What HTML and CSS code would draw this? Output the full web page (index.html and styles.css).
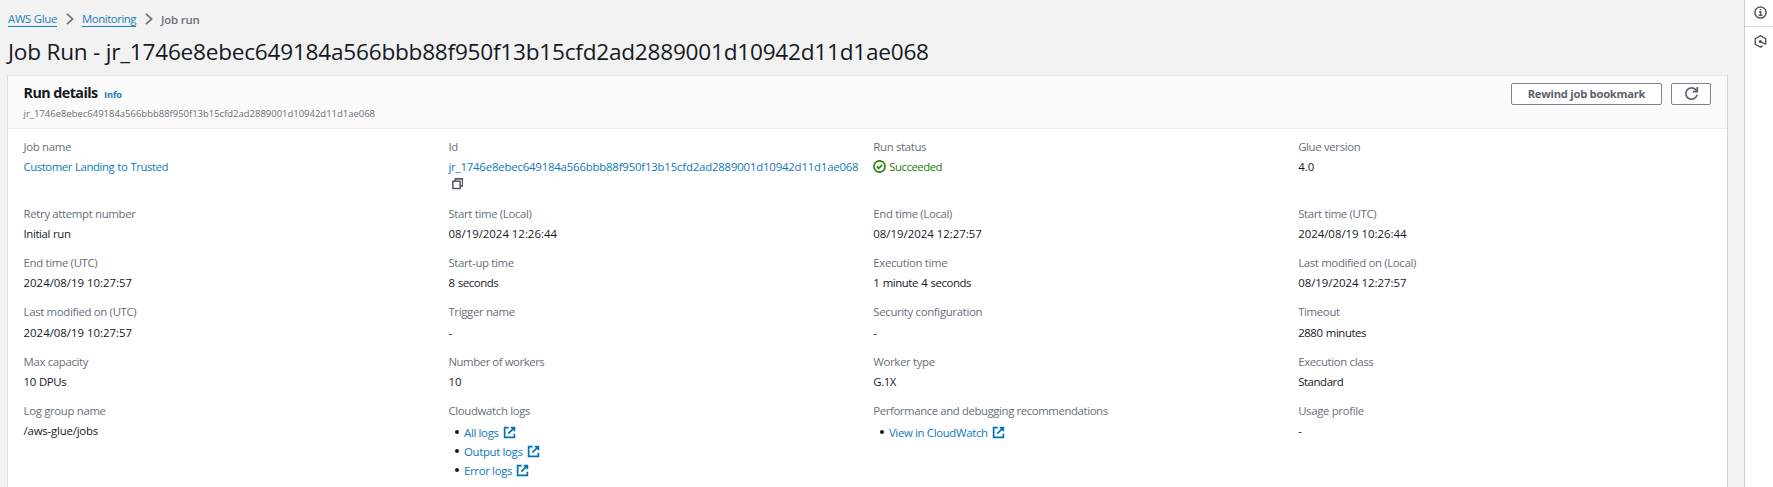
FILE: index.html
```
<!DOCTYPE html>
<html lang="en">
<head>
<meta charset="utf-8">
<title>Job run</title>
<link rel="stylesheet" href="styles.css">
</head>
<body>
<svg width="0" height="0" class="defs">
  <symbol id="ext" viewBox="0 0 16 16"><path d="M7 2H2v12h12V9.5M9.5 2H14v4.5M14 2 6.5 9.5" fill="none" stroke="currentColor" stroke-width="2.1"/></symbol>
</svg>
<div class="app">
  <main class="main">
    <nav class="crumbs">
      <a class="crumb">AWS Glue</a>
      <svg class="chev" viewBox="0 0 8 12"><path d="M1 .8 6.6 6 1 11.2" fill="none" stroke="currentColor" stroke-width="1.7"/></svg>
      <a class="crumb crumb-tight">Monitoring</a>
      <svg class="chev" viewBox="0 0 8 12"><path d="M1 .8 6.6 6 1 11.2" fill="none" stroke="currentColor" stroke-width="1.7"/></svg>
      <span class="here">Job run</span>
    </nav>
    <h1 class="title">Job Run - jr_1746e8ebec649184a566bbb88f950f13b15cfd2ad2889001d10942d11d1ae068</h1>
    <section class="panel">
      <header class="head">
        <div class="head-text">
          <div class="head-line"><h2 class="h2">Run details</h2><a class="info">Info</a></div>
          <div class="sub">jr_1746e8ebec649184a566bbb88f950f13b15cfd2ad2889001d10942d11d1ae068</div>
        </div>
        <div class="actions">
          <button class="btn btn-text">Rewind job bookmark</button>
          <button class="btn btn-icon" aria-label="Refresh"><svg class="refresh" viewBox="0 0 16 16"><path d="M14 9.2A6.1 6.1 0 1 1 12.6 4l1.6 1.6M14.2 1v5H9.4" fill="none" stroke="currentColor" stroke-width="1.8"/></svg></button>
        </div>
      </header>
      <div class="grid">
        <div><div class="label">Job name</div><div class="value"><a class="link link-job">Customer Landing to Trusted</a></div></div>
        <div><div class="label">Id</div><div class="value"><a class="link id">jr_1746e8ebec649184a566bbb88f950f13b15cfd2ad2889001d10942d11d1ae068</a></div><svg class="copy" viewBox="0 0 12 12"><path d="M3.4 3V.9h7.7v7.3H8.8M.9 3.3h7.6v7.6H.9z" fill="none" stroke="currentColor" stroke-width="1.6"/></svg></div>
        <div><div class="label">Run status</div><div class="value ok"><svg class="check" viewBox="0 0 13 13"><circle cx="6.5" cy="6.5" r="5.6" fill="none" stroke="currentColor" stroke-width="1.6"/><path d="M3.7 6.4 5.8 8.4 9.3 4.7" fill="none" stroke="currentColor" stroke-width="1.6"/></svg>Succeeded</div></div>
        <div><div class="label">Glue version</div><div class="value num">4.0</div></div>

        <div><div class="label">Retry attempt number</div><div class="value">Initial run</div></div>
        <div><div class="label">Start time (Local)</div><div class="value num">08/19/2024 12:26:44</div></div>
        <div><div class="label">End time (Local)</div><div class="value num">08/19/2024 12:27:57</div></div>
        <div><div class="label">Start time (UTC)</div><div class="value num">2024/08/19 10:26:44</div></div>

        <div><div class="label">End time (UTC)</div><div class="value num">2024/08/19 10:27:57</div></div>
        <div><div class="label">Start-up time</div><div class="value">8 seconds</div></div>
        <div><div class="label">Execution time</div><div class="value">1 minute 4 seconds</div></div>
        <div><div class="label">Last modified on (Local)</div><div class="value num">08/19/2024 12:27:57</div></div>

        <div><div class="label">Last modified on (UTC)</div><div class="value num">2024/08/19 10:27:57</div></div>
        <div><div class="label">Trigger name</div><div class="value">-</div></div>
        <div><div class="label">Security configuration</div><div class="value">-</div></div>
        <div><div class="label">Timeout</div><div class="value">2880 minutes</div></div>

        <div><div class="label">Max capacity</div><div class="value">10 DPUs</div></div>
        <div><div class="label label-workers">Number of workers</div><div class="value num">10</div></div>
        <div><div class="label">Worker type</div><div class="value">G.1X</div></div>
        <div><div class="label">Execution class</div><div class="value">Standard</div></div>

        <div><div class="label">Log group name</div><div class="value value-path">/aws-glue/jobs</div></div>
        <div><div class="label">Cloudwatch logs</div>
          <ul class="list">
            <li class="item"><a class="link">All logs</a><svg class="ext"><use href="#ext"/></svg></li>
            <li class="item"><a class="link">Output logs</a><svg class="ext"><use href="#ext"/></svg></li>
            <li class="item"><a class="link">Error logs</a><svg class="ext"><use href="#ext"/></svg></li>
          </ul>
        </div>
        <div><div class="label label-perf">Performance and debugging recommendations</div>
          <ul class="list"><li class="item"><a class="link">View in CloudWatch</a><svg class="ext"><use href="#ext"/></svg></li></ul>
        </div>
        <div><div class="label">Usage profile</div><div class="value">-</div></div>
      </div>
    </section>
  </main>
  <aside class="tools">
    <div class="tool tool-first"><svg class="tool-icon" viewBox="0 0 13 13"><circle cx="6.5" cy="6.5" r="5.6" fill="none" stroke="currentColor" stroke-width="1.5"/><path d="M5 5.7h1.7v3.5M4.7 9.2h3.8M5.8 3.6h1.5" fill="none" stroke="currentColor" stroke-width="1.4"/></svg></div>
    <div class="tool"><svg class="tool-icon" viewBox="0 0 13 13"><path d="M11.7 9.3V3.7L6.5.9 1.3 3.7v5.6l5.2 2.8 2.4-1.3M6.5 6.6l5.2 2.7" fill="none" stroke="currentColor" stroke-width="1.5"/><circle cx="6.4" cy="6.6" r="1.7" fill="currentColor"/></svg></div>
  </aside>
</div>
</body>
</html>
```
FILE: styles.css
```
* { box-sizing: border-box; }
body {
  margin: 0;
  height: 487px;
  overflow: hidden;
  background: #f2f2f2;
  color: #16191f;
  font-family: "Open Sans", "Noto Sans", sans-serif;
  font-size: 11.4px;
}
.defs { position: absolute; }
.app { display: flex; height: 487px; }
.main { flex: 1; min-width: 0; padding: 10px 17px 0 8px; overflow: hidden; }

.crumbs { display: flex; align-items: center; height: 18px; }
.crumb {
  color: #1a80b8;
  line-height: 14px;
  border-bottom: 1px solid #1a80b8;
  letter-spacing: -.3px;
  font-weight: 500;
}
.crumb-tight { letter-spacing: -.46px; }
.chev { width: 8px; height: 12px; margin: 0 8.5px; color: #687078; }
.here { color: #687078; font-weight: 600; letter-spacing: -.2px; }

.title {
  margin: 8px 0 7px;
  font-size: 22.6px;
  font-weight: 400;
  line-height: 32px;
  letter-spacing: -.23px;
  white-space: nowrap;
}

.panel {
  height: 440px;
  background: #fff;
  border-top: 1px solid #eaeded;
  box-shadow: -1px 0 0 #d9dddd, 1px 0 0 #d0d5d5;
}
.head {
  display: flex;
  justify-content: space-between;
  height: 53px;
  padding: 6px 16px 0 15.6px;
  background: #fafafa;
  border-bottom: 1px solid #eaeded;
}
.head-line { display: flex; align-items: baseline; gap: 6.5px; line-height: 22px; }
.h2 { margin: 0; font-size: 14.3px; font-weight: 700; letter-spacing: -.56px; }
.info { color: #1a80b8; font-size: 9.4px; font-weight: 700; letter-spacing: -.2px; }
.sub { color: #687078; font-size: 9.48px; line-height: 15px; }
.actions { display: flex; gap: 9px; padding-top: .5px; }
.btn {
  height: 22px;
  padding: 0;
  background: #fff;
  border: 1px solid #7d8489;
  border-radius: 2px;
  color: #5c636b;
  font: 700 11.2px/18px "Open Sans", sans-serif;
  letter-spacing: -.25px;
}
.btn-text { width: 151px; }
.btn-icon { display: flex; align-items: center; justify-content: center; width: 40px; }
.refresh { width: 15px; height: 15px; }

.grid {
  display: grid;
  grid-template-columns: repeat(4, minmax(0, 1fr));
  column-gap: 12px;
  row-gap: 11.8px;
  padding: 8.7px 16px 0 15.6px;
}
.label { color: #687078; line-height: 17.4px; margin-bottom: 2.8px; letter-spacing: -.34px; }
.label-perf { letter-spacing: -.41px; }
.label-workers { letter-spacing: -.45px; }
.value { font-weight: 500; line-height: 17.4px; letter-spacing: -.42px; word-spacing: .7px; white-space: nowrap; }
.value-path { letter-spacing: -.2px; }
.num { letter-spacing: 0; word-spacing: 0; }
.link { color: #0e7abb; font-weight: 500; }
.link-job { letter-spacing: -.47px; }
.id { letter-spacing: -.19px; }
.copy { display: block; width: 11.5px; height: 11.5px; margin: 3px 0 3px 3.5px; color: #545b64; }
.ok { display: flex; align-items: center; gap: 3px; color: #1d8102; letter-spacing: -.5px; }
.check { width: 13px; height: 13px; }
.list { margin: 1px 0 0; padding: 0 0 0 6.6px; list-style: none; }
.item { display: flex; align-items: center; height: 19.2px; letter-spacing: -.34px; white-space: nowrap; }
.item::before { content: ""; width: 4px; height: 4px; margin-right: 5px; border-radius: 50%; background: #16191f; }
.ext { width: 13px; height: 13px; margin-left: 4px; color: #0073bb; }

.tools { width: 29px; background: #fff; border-left: 1px solid #c9cfcf; color: #545b64; }
.tool { display: flex; justify-content: center; padding: 8px 0 0 3px; }
.tool-first { height: 27px; padding-top: 5.5px; border-bottom: 1px solid #d5dbdb; }
.tool-icon { width: 13px; height: 13px; }
```
